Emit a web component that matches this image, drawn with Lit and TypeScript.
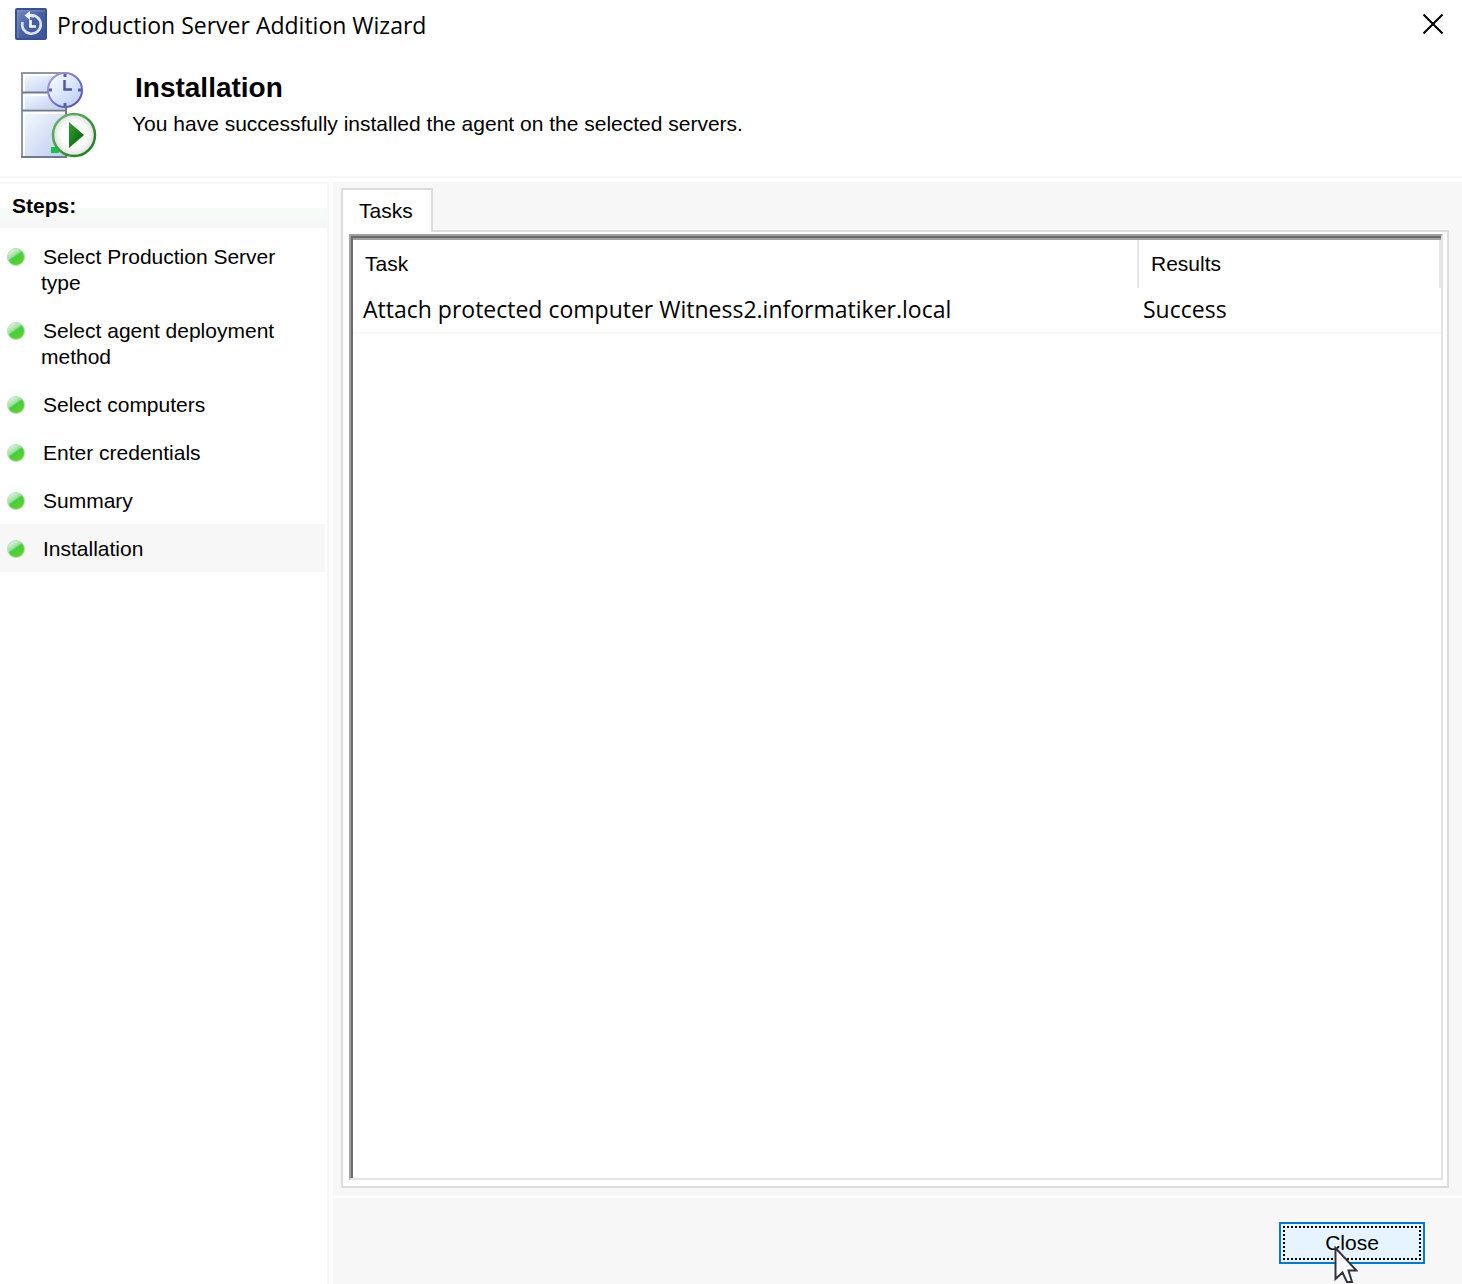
import { LitElement, html, css } from "lit";
import { customElement, property } from "lit/decorators.js";

interface Step {
  label: string;
  current?: boolean;
}

const STEPS: Step[] = [
  { label: "Select Production Server type" },
  { label: "Select agent deployment method" },
  { label: "Select computers" },
  { label: "Enter credentials" },
  { label: "Summary" },
  { label: "Installation", current: true },
];

const TASKS = [
  { task: "Attach protected computer Witness2.informatiker.local", result: "Success" },
];

const appIcon = html`<svg class="app-icon" viewBox="0 0 32 32" aria-hidden="true">
  <defs>
    <linearGradient id="tile" x1="0" y1="0" x2="1" y2="1">
      <stop offset="0" stop-color="#7489bf" />
      <stop offset="0.5" stop-color="#4660a6" />
      <stop offset="1" stop-color="#3a53a0" />
    </linearGradient>
  </defs>
  <rect x="1" y="1" width="30" height="30" rx="1" fill="url(#tile)" stroke="#3a5190" stroke-width="2" />
  <path d="M2 3H30M3 2V30" stroke="#8a9ccb" stroke-width="1" opacity="0.7" />
  <path d="M7.500 14A9.300 9.300 0 1 0 14 7.500L19 8.500" fill="none" stroke="#dfe5f4" stroke-width="2.600" />
  <path d="M9.500 7.500L15 3V12Z" fill="#eef1fa" />
  <path d="M15.500 12V18.500H21" fill="none" stroke="#fff" stroke-width="2.600" />
</svg>`;

const serverIcon = html`<svg class="server-icon" viewBox="0 0 76 88" aria-hidden="true">
  <defs>
    <linearGradient id="case" x1="0" y1="0" x2="1" y2="1">
      <stop offset="0" stop-color="#f6f9ff" />
      <stop offset="1" stop-color="#bccdf0" />
    </linearGradient>
    <linearGradient id="face" x1="0" y1="0" x2="1" y2="1">
      <stop offset="0" stop-color="#ffffff" />
      <stop offset="1" stop-color="#b4cdfb" />
    </linearGradient>
    <linearGradient id="ring" x1="0" y1="0" x2="1" y2="1">
      <stop offset="0" stop-color="#a3a1ea" />
      <stop offset="1" stop-color="#4e4ba4" />
    </linearGradient>
    <linearGradient id="green" x1="0" y1="0" x2="1" y2="1">
      <stop offset="0" stop-color="#6cba6c" />
      <stop offset="1" stop-color="#157515" />
    </linearGradient>
    <radialGradient id="disc">
      <stop offset="0.6" stop-color="#ffffff" />
      <stop offset="1" stop-color="#dedede" />
    </radialGradient>
    <linearGradient id="arrow" x1="0" y1="0" x2="1" y2="1">
      <stop offset="0" stop-color="#35a035" />
      <stop offset="1" stop-color="#005c00" />
    </linearGradient>
  </defs>
  <rect x="2" y="2" width="43" height="18" fill="url(#case)" />
  <rect x="2" y="22" width="43" height="15" fill="url(#case)" />
  <rect x="2" y="40" width="43" height="44" fill="url(#case)" />
  <path d="M3 3V84M3 3H44M3 23H44M3 41H44" stroke="#fff" stroke-width="2" />
  <path d="M1 86V1H44" fill="none" stroke="#8d98a5" stroke-width="2" />
  <path d="M1 20.500H45M1 38.500H45M0 85H46M45 30V86" stroke="#6f7b8b" stroke-width="2" />
  <rect x="30" y="75" width="8" height="6" fill="#18c24a" />
  <circle cx="44" cy="18" r="17" fill="url(#face)" stroke="url(#ring)" stroke-width="2" />
  <path d="M44 2V5M44 31V34M28 18H31M57 18H60" stroke="#5c5ab4" stroke-width="3" />
  <path d="M43.500 8V17.500H51" fill="none" stroke="#5654a4" stroke-width="2.500" />
  <circle cx="53" cy="63" r="21" fill="url(#disc)" stroke="url(#green)" stroke-width="2.500" />
  <path d="M48 50L63 63L48 76Z" fill="url(#arrow)" />
</svg>`;

const bullet = html`<svg class="bullet" viewBox="0 0 18 18" aria-hidden="true">
  <defs>
    <linearGradient id="ball" x1="0.150" y1="0.100" x2="0.700" y2="0.900">
      <stop offset="0" stop-color="#e6f8e6" />
      <stop offset="0.400" stop-color="#9be09b" />
      <stop offset="0.520" stop-color="#3fd23c" />
      <stop offset="1" stop-color="#62cf2c" />
    </linearGradient>
  </defs>
  <circle cx="9" cy="9" r="8.500" fill="url(#ball)" stroke="#b9dcb6" stroke-width="1" />
</svg>`;

const closeGlyph = html`<svg class="close-glyph" viewBox="0 0 20 20" aria-hidden="true">
  <path d="M0.500 0.500L19.500 19.500M19.500 0.500L0.500 19.500" stroke="#000" stroke-width="2" />
</svg>`;

const pointer = html`<svg class="pointer" viewBox="0 0 24 37" aria-hidden="true">
  <path d="M1.500 2V33L8.500 26.500L13 36H18L14.500 24.500H22.500Z" fill="#fff" stroke="#33343c" stroke-width="2" />
</svg>`;

@customElement("wizard-steps")
class WizardSteps extends LitElement {
  @property({ attribute: false }) steps: Step[] = [];

  static styles = css`
    :host {
      display: block;
    }
    .title {
      margin: 0 0 4px;
      padding: 0 12px;
      font-size: 21px;
      line-height: 44px;
      font-weight: 700;
      background: linear-gradient(#fff 24px, #f6fbf8 24px, #f6fbf8 34px, #f7f7f7 34px);
    }
    .list {
      margin: 0;
      padding: 0 2px 0 0;
      list-style: none;
    }
    .step {
      display: flex;
      gap: 16px;
      padding: 12px 32px 10px 7px;
      line-height: 26px;
    }
    .current {
      background: #f7f7f7;
    }
    .bullet {
      flex: none;
      width: 18px;
      height: 18px;
      margin-top: 4px;
    }
    .label {
      text-indent: 2px;
    }
  `;

  render() {
    return html`
      <h2 class="title">Steps:</h2>
      <ol class="list">
        ${this.steps.map(
          (s) => html`<li class="step ${s.current ? "current" : ""}" aria-current=${s.current ? "step" : "false"}>
            ${bullet}<span class="label">${s.label}</span>
          </li>`
        )}
      </ol>
    `;
  }
}

@customElement("app-root")
class AppRoot extends LitElement {
  static styles = css`
    :host {
      display: flex;
      flex-direction: column;
      min-height: 100vh;
      background: #fff;
      color: #000;
      font-family: "Liberation Sans", Arial, sans-serif;
      font-size: 21px;
    }
    .titlebar {
      display: flex;
      align-items: center;
      gap: 10px;
      height: 48px;
      padding: 0 19px 0 15px;
      font-family: "Open Sans", "Noto Sans", sans-serif;
    }
    .caption {
      flex: 1;
      padding-top: 2px;
      font-size: 23px;
      line-height: 32px;
    }
    .app-icon {
      width: 32px;
      height: 32px;
    }
    .close-x {
      display: flex;
      padding: 0;
      border: 0;
      background: none;
    }
    .close-glyph {
      width: 20px;
      height: 20px;
    }
    .banner {
      display: flex;
      gap: 35px;
      padding: 24px 21px 16px;
      border-bottom: 2px solid #f7f7f7;
      margin-bottom: 4px;
    }
    .server-icon {
      width: 76px;
      height: 88px;
    }
    .heading {
      margin: 0 0 4px;
      padding-left: 3px;
      font-size: 28px;
      line-height: 32px;
      font-weight: 700;
    }
    .message {
      margin: 0;
      line-height: 32px;
    }
    .body {
      flex: 1;
      display: grid;
      grid-template-columns: 329px 1fr;
      gap: 4px;
    }
    .side {
      border-top: 2px solid #f7f7f7;
      border-right: 2px solid #f7f7f7;
    }
    .main {
      display: flex;
      flex-direction: column;
      background: #f7f7f7;
    }
    .tabs {
      flex: 1;
      display: flex;
      flex-direction: column;
      padding: 6px 13px 8px 8px;
    }
    .tab {
      align-self: flex-start;
      position: relative;
      z-index: 1;
      margin-bottom: -2px;
      padding: 0 18px 0 16px;
      border: 2px solid #dcdcdc;
      border-bottom: 0;
      background: #fff;
      color: #000;
      font: inherit;
      line-height: 42px;
    }
    .panel {
      flex: 1;
      display: flex;
      padding: 2px 4px 6px 6px;
      border: 2px solid #dcdcdc;
      background: #fff;
    }
    .list {
      flex: 1;
      border-style: solid;
      border-width: 2px;
      border-color: #a0a0a0 #e3e3e3 #e3e3e3 #a0a0a0;
    }
    .inner {
      box-sizing: border-box;
      height: 100%;
      padding-top: 2px;
      border-top: 2px solid #696969;
      border-left: 2px solid #696969;
      box-shadow: inset 0 2px #a0a0a0;
    }
    .tasks {
      width: 100%;
      border-spacing: 0;
      table-layout: fixed;
      text-align: left;
    }
    .col-result {
      width: 302px;
    }
    .th {
      height: 48px;
      padding: 0 12px;
      border-right: 2px solid #e5e8e8;
      font-weight: 400;
      line-height: 46px;
    }
    .td {
      padding: 0 4px 2px;
      border-bottom: 2px solid #f7f7f7;
      font-family: "Open Sans", "Noto Sans", sans-serif;
      font-size: 23px;
      line-height: 42px;
    }
    .td:first-child {
      padding-left: 10px;
    }
    .footer {
      display: flex;
      justify-content: flex-end;
      padding: 24px 37px 20px;
      border-top: 2px solid #fff;
    }
    .close {
      position: relative;
      width: 146px;
      height: 42px;
      padding: 2px;
      border: 2px solid #0078d7;
      background: #e5f4fe;
      color: #000;
      font: inherit;
    }
    .focus {
      display: block;
      border: 2px dotted #000;
      line-height: 30px;
    }
    .pointer {
      position: absolute;
      left: 53px;
      top: 22px;
      width: 24px;
      height: 37px;
      z-index: 2;
    }
  `;

  render() {
    return html`
      <header class="titlebar">
        ${appIcon}
        <span class="caption">Production Server Addition Wizard</span>
        <button class="close-x" aria-label="Close window">${closeGlyph}</button>
      </header>
      <section class="banner">
        ${serverIcon}
        <div>
          <h1 class="heading">Installation</h1>
          <p class="message">You have successfully installed the agent on the selected servers.</p>
        </div>
      </section>
      <div class="body">
        <wizard-steps class="side" .steps=${STEPS}></wizard-steps>
        <main class="main">
          <div class="tabs">
            <button class="tab" role="tab" id="tab" aria-selected="true">Tasks</button>
            <div class="panel" role="tabpanel" aria-labelledby="tab">
              <div class="list">
                <div class="inner">
                  <table class="tasks">
                    <colgroup>
                      <col />
                      <col class="col-result" />
                    </colgroup>
                    <thead>
                      <tr><th class="th">Task</th><th class="th">Results</th></tr>
                    </thead>
                    <tbody>
                      ${TASKS.map(
                        (t) => html`<tr><td class="td">${t.task}</td><td class="td">${t.result}</td></tr>`
                      )}
                    </tbody>
                  </table>
                </div>
              </div>
            </div>
          </div>
          <footer class="footer">
            <button class="close"><span class="focus">Close</span>${pointer}</button>
          </footer>
        </main>
      </div>
    `;
  }
}
